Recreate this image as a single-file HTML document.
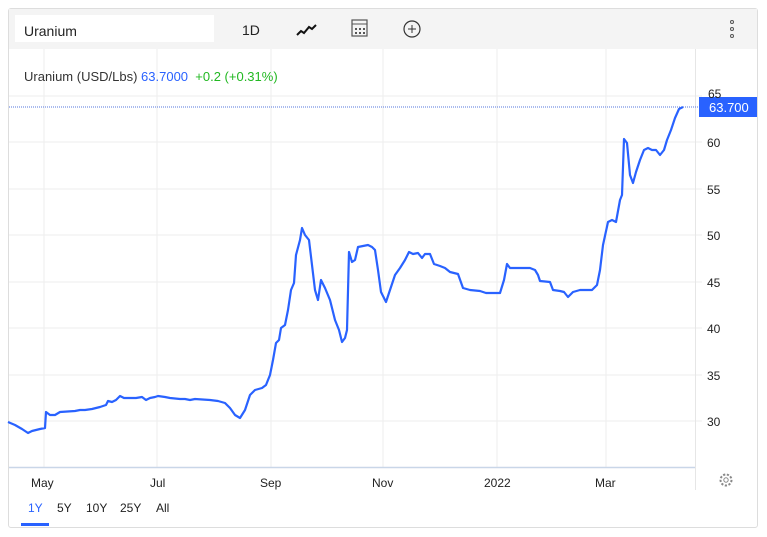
<!DOCTYPE html>
<html><head><style>
body{margin:0;width:767px;height:537px;background:#fff;font-family:"Liberation Sans",sans-serif;position:relative;overflow:hidden}
.card{position:absolute;left:8px;top:8px;width:748px;height:518px;border:1px solid #ddd;border-radius:3px}
.tb{position:absolute;left:9px;top:9px;width:748px;height:40px;background:#f4f4f4}
.t{position:absolute;font-size:13px;color:#222}
</style></head><body>
<div class="card"></div>
<div class="tb"></div>
<div style="position:absolute;left:15px;top:15px;width:199px;height:27px;background:#fff"></div>
<div class="t" style="left:24px;top:23px;font-size:14px">Uranium</div>
<div class="t" style="left:242px;top:22px;font-size:14px">1D</div>
<svg style="position:absolute;left:0;top:0" width="767" height="537">
<polyline points="297,35 301,31 304,33 309,27 312,29 316,25" fill="none" stroke="#111" stroke-width="2"/>
<rect x="352" y="20" width="15" height="16" fill="none" stroke="#555" stroke-width="1.2"/>
<line x1="352" y1="24" x2="367" y2="24" stroke="#555"/>
<g fill="#555"><rect x="355" y="28" width="2" height="2"/><rect x="359" y="28" width="2" height="2"/><rect x="363" y="28" width="2" height="2"/><rect x="355" y="32" width="2" height="2"/><rect x="359" y="32" width="2" height="2"/><rect x="363" y="32" width="2" height="2"/></g>
<circle cx="412" cy="29" r="8" fill="none" stroke="#333" stroke-width="1.2"/>
<line x1="408" y1="29" x2="416" y2="29" stroke="#333"/><line x1="412" y1="25" x2="412" y2="33" stroke="#333"/>
<g fill="none" stroke="#555"><circle cx="732" cy="22" r="1.5"/><circle cx="732" cy="29" r="1.5"/><circle cx="732" cy="36" r="1.5"/></g>
<g stroke="#eee" stroke-width="1">
<line x1="44" y1="49" x2="44" y2="467"/><line x1="157" y1="49" x2="157" y2="467"/><line x1="271" y1="49" x2="271" y2="467"/><line x1="383" y1="49" x2="383" y2="467"/><line x1="497" y1="49" x2="497" y2="467"/><line x1="606" y1="49" x2="606" y2="467"/>
<line x1="9" y1="96" x2="702" y2="96"/><line x1="9" y1="142" x2="702" y2="142"/><line x1="9" y1="189" x2="702" y2="189"/><line x1="9" y1="235" x2="702" y2="235"/><line x1="9" y1="282" x2="702" y2="282"/><line x1="9" y1="328" x2="702" y2="328"/><line x1="9" y1="375" x2="702" y2="375"/><line x1="9" y1="421" x2="702" y2="421"/>
</g>
<line x1="695.5" y1="49" x2="695.5" y2="490" stroke="#e6e6e6"/>
<line x1="9" y1="467.5" x2="695" y2="467.5" stroke="#c9d6e8" stroke-width="1.5"/>
<line x1="9" y1="107" x2="698" y2="107" stroke="#5577dd" stroke-dasharray="1,1" stroke-width="1"/>
<polyline fill="none" stroke="#2962ff" stroke-width="2.2" stroke-linejoin="round" points="8,422 15,425 22,429 28,433 32,431 40,429 45,428 46,412 50,415 55,415 60,412 75,411 80,410 85,410 92,409 100,407 106,405 108,401 112,402 116,400 120,396 124,398 130,398 136,398 142,397 146,400 150,398 155,397 158,396 165,397 170,398 180,399 185,399 190,400 195,399 210,400 218,401 225,403 230,408 235,415 240,418 245,410 250,395 255,390 262,388 266,385 270,375 273,360 276,343 279,340 281,328 285,325 288,310 291,290 294,283 296,255 300,240 302,228 305,235 309,240 312,265 315,290 318,300 321,280 325,288 330,300 335,320 339,330 342,342 345,338 347,330 349,252 352,262 355,260 358,247 363,246 368,245 372,247 375,250 378,270 381,292 386,302 390,290 395,275 400,268 405,260 409,252 413,254 418,253 422,258 425,254 430,254 434,264 440,266 445,268 450,272 458,274 463,288 470,290 480,291 486,293 500,293 504,280 507,264 510,268 515,268 530,268 535,270 538,275 540,281 550,282 553,290 560,291 564,292 568,297 573,292 580,290 592,290 597,285 600,270 603,245 608,222 612,220 616,222 620,200 622,195 624,139 627,143 630,175 633,183 636,172 640,160 644,150 648,148 652,150 656,150 660,155 664,150 667,140 671,130 675,118 679,109 683,107"/>
<rect x="699" y="97" width="58" height="20" fill="#2962ff"/>
<circle cx="726" cy="480" r="5.5" fill="none" stroke="#888" stroke-width="2" stroke-dasharray="2.2,1.6"/>
<circle cx="726" cy="480" r="2.2" fill="none" stroke="#888"/>
<rect x="21" y="523" width="28" height="3" fill="#2962ff"/>
</svg>
<div class="t" style="left:24px;top:69px;font-size:13px;color:#333">Uranium (USD/Lbs) <span style="color:#2962ff">63.7000</span> &nbsp;<span style="color:#22b822">+0.2 (+0.31%)</span></div>
<div class="t" style="left:709px;top:100px;font-size:13px;color:#fff">63.700</div>
<div class="t" style="left:708px;top:87px;font-size:12px">65</div>
<div class="t" style="left:707px;top:136px;font-size:12px">60</div>
<div class="t" style="left:707px;top:183px;font-size:12px">55</div>
<div class="t" style="left:707px;top:229px;font-size:12px">50</div>
<div class="t" style="left:707px;top:276px;font-size:12px">45</div>
<div class="t" style="left:707px;top:322px;font-size:12px">40</div>
<div class="t" style="left:707px;top:369px;font-size:12px">35</div>
<div class="t" style="left:707px;top:415px;font-size:12px">30</div>
<div class="t" style="left:31px;top:476px;font-size:12px">May</div>
<div class="t" style="left:150px;top:476px;font-size:12px">Jul</div>
<div class="t" style="left:260px;top:476px;font-size:12px">Sep</div>
<div class="t" style="left:372px;top:476px;font-size:12px">Nov</div>
<div class="t" style="left:484px;top:476px;font-size:12px">2022</div>
<div class="t" style="left:595px;top:476px;font-size:12px">Mar</div>
<div class="t" style="left:28px;top:501px;font-size:12px;color:#2962ff">1Y</div>
<div class="t" style="left:57px;top:501px;font-size:12px">5Y</div>
<div class="t" style="left:86px;top:501px;font-size:12px">10Y</div>
<div class="t" style="left:120px;top:501px;font-size:12px">25Y</div>
<div class="t" style="left:156px;top:501px;font-size:12px">All</div>
</body></html>
